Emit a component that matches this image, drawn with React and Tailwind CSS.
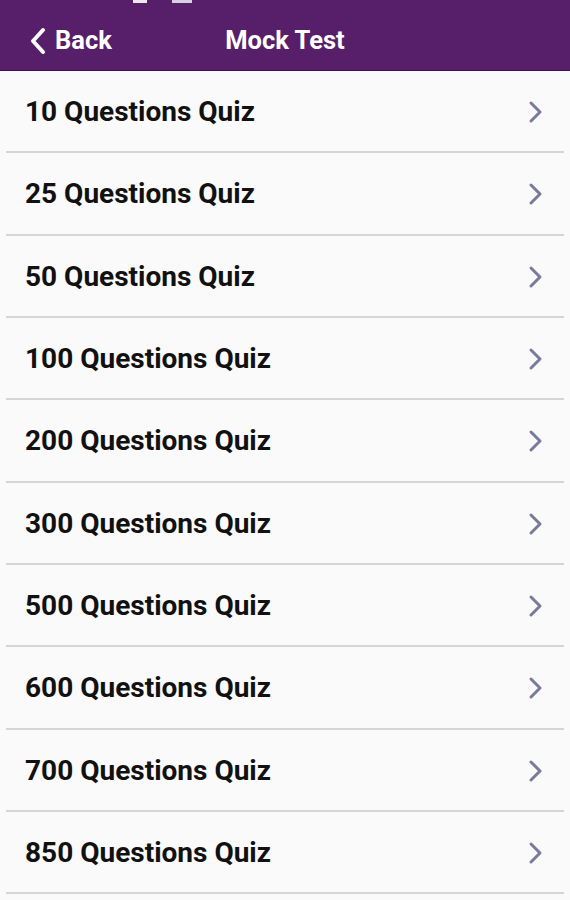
const quizzes = [10, 25, 50, 100, 200, 300, 500, 600, 700, 850];

function RowChevron() {
  return (
    <svg width="16" height="24" viewBox="0 0 16 24" className="shrink-0">
      <path
        d="M3 3 L12 12 L3 21"
        fill="none"
        stroke="#7a7a9a"
        strokeWidth="3"
        strokeLinecap="round"
        strokeLinejoin="round"
      />
    </svg>
  );
}

function BackChevron() {
  return (
    <svg width="20" height="28" viewBox="0 0 20 28" className="shrink-0">
      <path
        d="M15 3 L5 14 L15 25"
        fill="none"
        stroke="#ffffff"
        strokeWidth="4"
        strokeLinecap="round"
        strokeLinejoin="round"
      />
    </svg>
  );
}

export default function App() {
  return (
    <div
      className="w-[570px] h-[900px] overflow-hidden bg-[#fafafa] flex flex-col"
      style={{ fontFamily: "Roboto, 'Noto Sans', sans-serif" }}
    >
      {/* Header */}
      <div className="relative h-[71px] shrink-0 bg-[#571f6a] border-b border-[#3e1250] flex items-center pt-[11px]">
        {/* status bar remnants */}
        <div className="absolute top-0 left-[133px] w-[14px] h-[3px] bg-white/90" />
        <div className="absolute top-0 left-[172px] w-[20px] h-[3px] bg-[#d8cfe0]" />
        <div className="flex items-center gap-[7px] pl-[28px] text-white">
          <BackChevron />
          <span className="text-[25.5px] font-bold leading-none">Back</span>
        </div>
        <div className="absolute inset-x-0 top-0 h-full flex items-center justify-center pt-[11px] pointer-events-none">
          <span className="text-[25.5px] font-bold leading-none text-white">Mock Test</span>
        </div>
      </div>

      {/* List */}
      <div className="flex flex-col">
        {quizzes.map((n) => (
          <div key={n} className="flex flex-col">
            <div className="h-[80.33px] flex items-center justify-between pl-[25px] pr-[26px] pt-[2px]">
              <span className="text-[28px] font-bold text-[#111111] leading-none">
                {n} Questions Quiz
              </span>
              <RowChevron />
            </div>
            <div className="h-[2px] ml-[6px] mr-[6px] bg-[#d5d5d5]" />
          </div>
        ))}
      </div>
    </div>
  );
}
